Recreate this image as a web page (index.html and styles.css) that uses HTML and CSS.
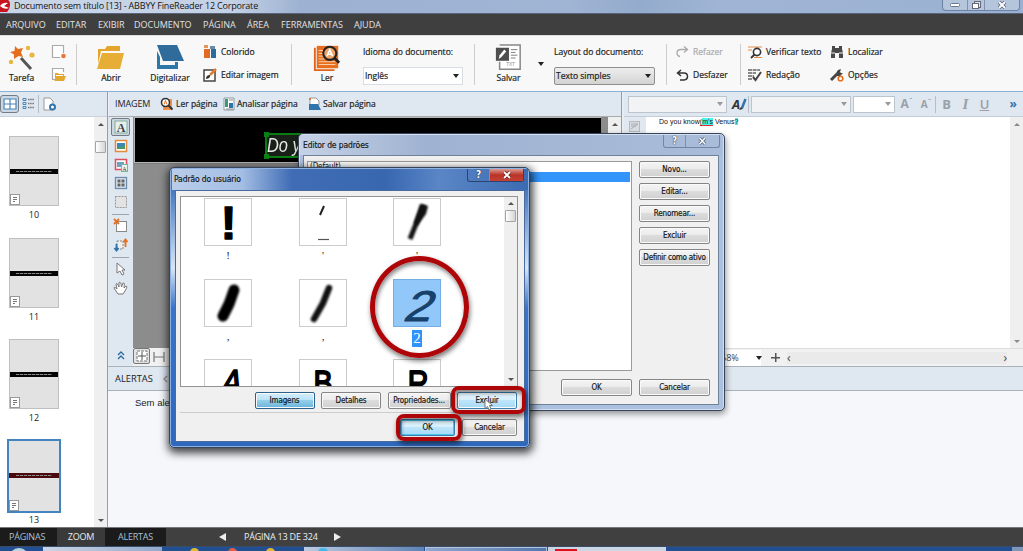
FILE: index.html
```html
<!DOCTYPE html>
<html lang="pt">
<head>
<meta charset="utf-8">
<title>ABBYY FineReader 12 Corporate</title>
<link rel="stylesheet" href="styles.css">
</head>
<body>
<div class="app">
  <header class="titlebar">
    <svg class="logo" width="11" height="13" viewBox="0 0 11 13"><path d="M0 0H8Q10 1 10 5Q10 9 7 12H0Z" fill="#c8141e"/><path d="M0 6Q3 2 8 3L4 6L9 8Q4 10 0 6Z" fill="#fff"/></svg>
    <span class="title-text">Documento sem título [13] - ABBYY FineReader 12 Corporate</span>
    <div class="winctl"><i><svg width="10" height="5"><rect x=".5" y=".5" width="9" height="3" rx="1" fill="#fff" stroke="#68788f"/></svg></i><i><svg width="9" height="9"><rect x="2.5" y=".5" width="6" height="6" fill="#dde5ef" stroke="#667"/><rect x=".5" y="2.5" width="6" height="5" fill="#fff" stroke="#667"/></svg></i><i class="wide"><svg width="10" height="9"><path d="M2 1L8 7M8 1L2 7" stroke="#5c6a80" stroke-width="3.6"/><path d="M2 1L8 7M8 1L2 7" stroke="#fff" stroke-width="1.8"/></svg></i></div>
  </header>
  <nav class="menu"><span class="m1">ARQUIVO</span><span class="m2">EDITAR</span><span class="m3">EXIBIR</span><span class="m4">DOCUMENTO</span><span class="m5">PÁGINA</span><span class="m6">ÁREA</span><span class="m7">FERRAMENTAS</span><span class="m8">AJUDA</span></nav>

  <section class="toolbar">
    <div class="big tarefa">
      <svg width="28" height="28" viewBox="0 0 28 28"><path d="M13 14L23 25" stroke="#555" stroke-width="3"/><path d="M7 2L10 5L15 4L13 8.500L15 13L10.500 12L6 15L6 10.500L2 8L6.500 7Z" fill="#e66f1e"/><g fill="#e9b640"><circle cx="20" cy="4" r="2.200"/><circle cx="24" cy="11" r="2.600"/><circle cx="3" cy="18" r="2.200"/></g></svg>
      <b>Tarefa</b>
    </div>
    <div class="stack">
      <svg width="16" height="16" viewBox="0 0 16 16"><path d="M12.500 9V1.500H1.500V13.500H9" fill="#fff" stroke="#aaa" stroke-width="1.200"/><circle cx="12.500" cy="12" r="2.300" fill="#e8763c"/></svg>
      <svg width="16" height="16" viewBox="0 0 16 16"><path d="M12.500 5V1.500H1.500V12.500H4" fill="#fff" stroke="#aaa" stroke-width="1.200"/><path d="M4 13V6h3l1 1h5v2h2l-2 5H3z" fill="#e3a72e"/><path d="M5 8.500h7" stroke="#fff" stroke-width="1"/></svg>
    </div>
    <i class="sep"></i>
    <div class="big abrir"><svg width="28" height="28" viewBox="0 0 28 28"><path d="M1 5H8L10 2H23V7H4L1 20Z" fill="#e3a62b"/><path d="M5 9H27L23 25H0Z" fill="#e6ad37"/></svg><b>Abrir</b></div>
    <div class="big digi"><svg width="28" height="28" viewBox="0 0 28 28"><path d="M1 1H21L28 17H7Z" fill="#2f6c9b"/><path d="M1 7V25H22V18H19V21H4V13Z" fill="#2d77a8"/></svg><b>Digitalizar</b></div>
    <div class="pair p1">
      <div><svg width="14" height="14" viewBox="0 0 14 14"><path d="M1 0h4v3H1z" fill="#e4945c"/><path d="M1 4h6v9H1z" fill="#e26b24"/><path d="M7 1h5v3H7z" fill="#6a8aa4"/><path d="M8 4h5v9H8z" fill="#2c6b9c"/></svg><b>Colorido</b></div>
      <div><svg width="14" height="14" viewBox="0 0 14 14"><path d="M1 2H12V13H1Z" fill="#fff" stroke="#444" stroke-width="1.500"/><path d="M13 1L7 7" stroke="#e27b32" stroke-width="2.500"/><path d="M3 11Q3 7 7 7Q8 10 3 11" fill="#333"/></svg><b>Editar imagem</b></div>
    </div>
    <i class="sep"></i>
    <div class="big ler"><svg width="30" height="30" viewBox="0 0 30 30"><path d="M1 4V29H23V27H3V4Z" fill="#e0651a"/><path d="M4 2H27V26H4Z" fill="#e86d1c"/><path d="M6 7h7M6 10h6M6 13h6M6 16h7M6 19h18M6 22h18" stroke="#fbd9b8" stroke-width="1"/><circle cx="18" cy="10" r="7" fill="#f0a468" stroke="#222" stroke-width="2.200"/><path d="M15 13L18 6L21 13M16 11H20" fill="none" stroke="#fff" stroke-width="1.600"/><path d="M23 15L28 20" stroke="#222" stroke-width="3"/></svg><b>Ler</b></div>
    <div class="field f1"><b>Idioma do documento:</b><div class="select"><b>Inglês</b><i class="dn"></i></div></div>
    <i class="sep"></i>
    <div class="big salvar"><svg width="29" height="30" viewBox="0 0 29 30"><path d="M5 1H27V27H5V19" fill="#fff" stroke="#888" stroke-width="1.600"/><path d="M1 4H15V18H1Z" fill="#4e4e4e"/><path d="M4 16l1-4 5-6 2 2-5 6z" fill="#fff"/><path d="M17 6h7M17 9h5M17 12h7M17 15h5" stroke="#777"/><text x="12" y="24" class="txt">TXT</text></svg><b>Salvar</b></div>
    <i class="dn mid"></i>
    <div class="field f2"><b>Layout do documento:</b><div class="select grey"><b>Texto simples</b><i class="dn"></i></div></div>
    <i class="sep"></i>
    <div class="pair p2">
      <div class="off"><svg width="13" height="14" viewBox="0 0 13 14"><path d="M4 11.500Q1 11 1 8Q1 4.500 5 4.500H11M8 1.500L11.500 4.500L8 7.500" fill="none" stroke="#aaa" stroke-width="1.300"/></svg><b>Refazer</b></div>
      <div><svg width="13" height="14" viewBox="0 0 13 14"><path d="M4 12H8Q11.500 11.500 11.500 8.500Q11.500 5 8 5H1.500M5 2L1.500 5L5 8" fill="none" stroke="#333" stroke-width="1.500"/></svg><b>Desfazer</b></div>
    </div>
    <i class="sep"></i>
    <div class="pair p3">
      <div><svg width="14" height="14" viewBox="0 0 14 14"><path d="M0 2H14M6 12.500H14M0 5h4" stroke="#e58b48" stroke-width="1.200"/><circle cx="9" cy="7" r="3.600" fill="#fff" stroke="#333" stroke-width="1.600"/><path d="M6.500 9.500L3 13" stroke="#333" stroke-width="1.800"/></svg><b>Verificar texto</b></div>
      <div><svg width="14" height="14" viewBox="0 0 14 14"><path d="M0 2h12M0 5h8M0 8h6M0 11h4" stroke="#666" stroke-width="1.600" stroke-dasharray="4 .6"/><path d="M13 4L7.500 12L5 9" fill="none" stroke="#444" stroke-width="2"/></svg><b>Redação</b></div>
    </div>
    <div class="pair p4">
      <div><svg width="14" height="14" viewBox="0 0 14 14"><path d="M2 1h3v2h4V1h3v3l1 4v5H9V8H5v5H1V8l1-4z" fill="#494949"/><path d="M1 8h4M9 8h4" stroke="#eee"/></svg><b>Localizar</b></div>
      <div><svg width="14" height="14" viewBox="0 0 14 14"><path d="M1 12L7 6" stroke="#444" stroke-width="3"/><path d="M11 1L8 2L6 5L7 8L10 8L13 5L11 5L10 4Z" fill="#444"/><circle cx="10.500" cy="10.500" r="2.300" fill="#fff" stroke="#e86d1c" stroke-width="1.600"/></svg><b>Opções</b></div>
    </div>
  </section>

  <main class="main">
    <aside class="pages">
      <div class="phead">
        <i class="viewbtn"><svg width="14" height="12" viewBox="0 0 14 12"><path d="M1 1H13V11H1ZM7 1V11M1 6H13" fill="#fff" stroke="#4b86b8" stroke-width="1.200"/></svg></i>
        <svg width="13" height="12" viewBox="0 0 13 12"><g fill="#dceaf6" stroke="#4b86b8"><path d="M1 .5h3v2H1zM1 4.500h3v2H1zM1 8.500h3v2H1z"/></g><path d="M6 1.500h6M6 5.500h6M6 9.500h6" stroke="#777" stroke-width="1.500" stroke-dasharray="1.500 .7"/></svg>
        <i class="vsep"></i>
        <svg width="14" height="14" viewBox="0 0 14 14"><path d="M1 1H7L10 4V13H1Z" fill="#fff" stroke="#999"/><circle cx="9.500" cy="10" r="2.500" fill="#fff" stroke="#3474a8" stroke-width="2"/></svg>
      </div>
      <div class="pbody">
        <div class="thumbs">
          <figure><div class="thumb"><i class="strip"></i><svg width="10" height="11"><rect x=".5" y=".5" width="9" height="10" fill="#fff" stroke="#999"/><path d="M3 3.500h4M3 5.500h4M3 7.500h2" stroke="#777"/></svg></div><figcaption>10</figcaption></figure>
          <figure><div class="thumb"><i class="strip"></i><svg width="10" height="11"><rect x=".5" y=".5" width="9" height="10" fill="#fff" stroke="#999"/><path d="M3 3.500h4M3 5.500h4M3 7.500h2" stroke="#777"/></svg></div><figcaption>11</figcaption></figure>
          <figure><div class="thumb"><i class="strip"></i><svg width="10" height="11"><rect x=".5" y=".5" width="9" height="10" fill="#fff" stroke="#999"/><path d="M3 3.500h4M3 5.500h4M3 7.500h2" stroke="#777"/></svg></div><figcaption>12</figcaption></figure>
          <figure><div class="thumb cur"><i class="strip"></i><svg width="10" height="11"><rect x=".5" y=".5" width="9" height="10" fill="#fff" stroke="#999"/><path d="M3 3.500h4M3 5.500h4M3 7.500h2" stroke="#777"/></svg></div><figcaption>13</figcaption></figure>
        </div>
        <div class="vscroll"><i class="up"></i><i class="knob"></i><i class="down"></i></div>
      </div>
    </aside>

    <div class="work">
      <div class="upper">
        <section class="image">
          <div class="ihead"><span class="cap">IMAGEM</span>
            <svg width="14" height="14" viewBox="0 0 14 14"><path d="M3 2H12V13H3Z" fill="#f0924e"/><circle cx="5.500" cy="5.500" r="4" fill="#fff" stroke="#333" stroke-width="1.600"/><path d="M8.500 8.500L12.500 12.500" stroke="#333" stroke-width="2"/><path d="M4 7.500L5.500 3.500L7 7.500" fill="none" stroke="#e66f1e"/></svg><b class="t1">Ler página</b>
            <svg width="12" height="14" viewBox="0 0 12 14"><path d="M1 1H11V13H1Z" fill="#fff" stroke="#8a979f"/><path d="M2 2h3v8H2z" fill="#3a9a78"/><path d="M6 6h4v5H6z" fill="#2f75ac"/><path d="M6 3h4M3 12h7" stroke="#888"/></svg><b class="t2">Analisar página</b>
            <svg width="13" height="14" viewBox="0 0 13 14"><path d="M2 1H8L11 4V8H2Z" fill="#fff" stroke="#999"/><path d="M1 1h2v2H1z" fill="#e8763c"/><path d="M1 7H10L13 13H1Z" fill="#2f75ac"/></svg><b class="t3">Salvar página</b>
          </div>
          <div class="ibody">
            <div class="tools">
              <i class="tool on"><svg width="14" height="14" viewBox="0 0 14 14"><rect x="1" y="1" width="12" height="12" fill="#e8f0ee" stroke="#7fae9d"/><text x="7" y="11.500" class="tA">A</text></svg></i>
              <i class="tool"><svg width="14" height="14" viewBox="0 0 14 14"><rect x="1.500" y="1.500" width="11" height="11" fill="#fff" stroke="#e58a3c" stroke-width="1.500"/><rect x="3" y="4" width="8" height="6" fill="#3b87b8"/><path d="M3 10l3-3 2 1 3-2v4z" fill="#4a9a69"/></svg></i>
              <i class="tool"><svg width="14" height="14" viewBox="0 0 14 14"><rect x="1.500" y="1.500" width="11" height="10" fill="#fff" stroke="#dc4d5e" stroke-width="1.500"/><path d="M3 4h7v5H3z" fill="#6ea0c0"/><rect x="7.500" y="6.500" width="6" height="7" fill="#e9f4ee" stroke="#7cb49c"/><text x="10.500" y="12.500" class="ta">A</text></svg></i>
              <i class="tool"><svg width="14" height="14" viewBox="0 0 14 14"><rect x="1.500" y="1.500" width="11" height="11" fill="#dbe4ed" stroke="#6b8eae" stroke-width="1.300"/><path d="M3.500 3.500h3v3h-3zM7.500 3.500h3v3h-3zM3.500 7.500h3v3h-3zM7.500 7.500h3v3h-3z" fill="#666"/></svg></i>
              <i class="tool"><svg width="14" height="14" viewBox="0 0 14 14"><rect x="1.500" y="1.500" width="11" height="11" fill="#e3e3e3" stroke="#999" stroke-dasharray="2 1"/></svg></i>
              <i class="hr"></i>
              <i class="tool"><svg width="14" height="14" viewBox="0 0 14 14"><rect x="2.500" y="2.500" width="10" height="10" fill="#fff" stroke="#888"/><path d="M0 0L5 5M5 0L0 5" stroke="#e8701e" stroke-width="1.800"/></svg></i>
              <i class="tool"><svg width="14" height="14" viewBox="0 0 14 14"><path d="M3 3h6v8H3z" fill="#eee" stroke="#888" stroke-dasharray="2 1"/><path d="M11.500 9V2M9.500 4L11.500 1.500L13.500 4" fill="none" stroke="#e8701e" stroke-width="1.800"/><path d="M2.500 6V12M.5 10L2.500 12.500L4.500 10" fill="none" stroke="#2a74ad" stroke-width="1.800"/></svg></i>
              <i class="hr"></i>
              <i class="tool"><svg width="12" height="14" viewBox="0 0 12 14"><path d="M2 1V11L5 9L7 13L9 12L7 8H10Z" fill="#fff" stroke="#777"/></svg></i>
              <i class="tool"><svg width="15" height="14" viewBox="0 0 15 14"><path d="M5 13L1 7Q1 5 4 8L3 3Q4 1 6 6V1.500Q8 0 8.500 6L10 2Q12 1 11 7L13 5Q15 5 12 10L10 13Z" fill="#fff" stroke="#777"/></svg></i>
              <span class="chev"><svg width="8" height="9"><path d="M1 4L4 1L7 4M1 8L4 5L7 8" fill="none" stroke="#2a6a9c" stroke-width="1.300"/></svg></span>
            </div>
            <div class="view">
              <div class="canvas">
                <div class="scan"><div class="region"><span>Do y</span><i></i><i></i></div></div>
                <div class="vscroll cs"><i class="up"></i></div>
              </div>
              <div class="zoombar"><i class="zb on"><svg width="12" height="12" viewBox="0 0 12 12"><path d="M1 1H11V11H1Z" fill="#fff" stroke="#777" stroke-dasharray="3 1"/><path d="M6 2V10M2 6H10" stroke="#555"/></svg></i><i class="zb"><svg width="12" height="12" viewBox="0 0 12 12"><path d="M1 1V11M11 1V11M1 6H11" stroke="#777" stroke-width="1.200"/></svg></i></div>
            </div>
          </div>
        </section>

        <section class="text">
          <div class="thead">
            <i class="inp i1"><i class="dn"></i></i>
            <svg class="fa" width="16" height="15" viewBox="0 0 16 15"><text x="0" y="12" class="aedit">A</text><path d="M13.500 2L10 11" stroke="#2f75ac" stroke-width="2.500"/><path d="M9 10L7 13L11 12Z" fill="#333"/></svg>
            <i class="vs"></i>
            <i class="inp i2"><i class="dn"></i></i>
            <i class="inp i3"><i class="dn"></i></i>
            <span class="g ga">A<sup>ˆ</sup></span><span class="g gb">A<sup>ˇ</sup></span><i class="vs v2"></i><span class="g gB">B</span><span class="g gI">I</span><span class="g gU">U</span><span class="more">»</span>
          </div>
          <div class="tbody">
            <div class="gut"><svg width="11" height="11"><rect x=".5" y=".5" width="10" height="10" fill="#d9dde2" stroke="#b5bac0"/><path d="M2 3h7M2 5h5M2 8L9 3" stroke="#a5acb3"/></svg></div>
            <p>Do you know<u>(</u><mark><u>m's</u></mark> Venus<mark>?</mark></p>
            <div class="vscroll ts"><i class="up"></i><i class="down"></i></div>
          </div>
          <div class="tfoot"><span class="pct">68%</span><i class="dn"></i><span class="plus"></span><span class="hs"><i>‹</i><i>›</i></span></div>
        </section>
      </div>
      <section class="alerts"><div class="ahead">ALERTAS <svg width="7" height="8"><path d="M4 1L1 4L4 7" fill="none" stroke="#999" stroke-width="1.500"/></svg></div><div class="abody">Sem alertas</div></section>
    </div>
  </main>

  <footer class="status"><span class="s1">PÁGINAS</span><span class="s2">ZOOM</span><span class="s3">ALERTAS</span><i class="tl"></i><span class="s4">PÁGINA 13 DE 324</span><i class="tr"></i></footer>
  <div class="task"><i class="k0"><i class="orb"></i></i><i class="k1"></i><i class="k2"><i class="y"></i><i class="r"></i><i class="y"></i></i><i class="k3"><i class="c"></i></i><i class="k4"></i><i class="k5"><i class="rr"></i></i><i class="k6"></i></div>
</div>

<section class="dialog editor">
  <div class="dhead"><span>Editor de padrões</span><div class="dctl"><i>?</i><i class="x"><svg width="9" height="8"><path d="M1.500 1L7 7M7 1L1.500 7" stroke="#56647a" stroke-width="3"/><path d="M1.500 1L7 7M7 1L1.500 7" stroke="#fff" stroke-width="1.400"/></svg></i></div></div>
  <div class="dcont">
    <div class="lcol"><div class="list"><span>(Default)</span><i></i></div><button>OK</button></div>
    <div class="rcol"><button>Novo...</button><button>Editar...</button><button>Renomear...</button><button>Excluir</button><button class="tight">Definir como ativo</button><button class="cancel">Cancelar</button></div>
  </div>
</section>

<section class="dialog user">
  <div class="dhead"><span>Padrão do usuário</span><div class="dctl"><i>?</i><i class="x"><svg width="10" height="8"><path d="M2 1L8 7M8 1L2 7" stroke="#6d2420" stroke-width="3.200"/><path d="M2 1L8 7M8 1L2 7" stroke="#fff" stroke-width="1.800"/></svg></i></div></div>
  <div class="dcont">
    <div class="pats">
      <div class="grid">
        <div class="cell"><svg width="48" height="48"><g transform="translate(23.500 40)"><text class="hand ex">!</text></g></svg><b>!</b></div>
        <div class="cell"><svg width="48" height="48"><path d="M24 7L20 16" stroke="#222" stroke-width="2"/><path d="M18 40.500H29" stroke="#555" stroke-width="1.200"/></svg><b>'</b></div>
        <div class="cell"><svg width="48" height="48" class="soft"><path d="M30 6L22 25L16 40" stroke="#111" stroke-width="5" fill="none"/><path d="M26 5L34 7L32 15L23 27L20 24Z" fill="#111"/></svg><b>'</b></div>
        <div class="cell"><svg width="48" height="48" class="soft"><path d="M29 10L24 24L18 36" stroke="#000" stroke-width="11" stroke-linecap="round" fill="none"/></svg><b>,</b></div>
        <div class="cell"><svg width="48" height="48" class="soft"><path d="M29 8L23 23L14 39" stroke="#111" stroke-width="6.500" stroke-linecap="round" fill="none"/></svg><b>,</b></div>
        <div class="cell sel"><svg width="48" height="48"><g transform="translate(22 41) skewX(-20) scale(1.150 1)"><text class="hand two">2</text></g></svg><b>2</b></div>
        <div class="cell"><svg width="48" height="48"><g transform="translate(24 35) skewX(-14) scale(.85 1)"><text class="hand">A</text></g></svg></div>
        <div class="cell"><svg width="48" height="48"><g transform="translate(23 35) scale(.8 1)"><text class="hand">B</text></g></svg></div>
        <div class="cell"><svg width="48" height="48"><g transform="translate(24 35) scale(.8 1)"><text class="hand">R</text></g></svg></div>
      </div>
      <div class="vscroll us"><i class="up"></i><i class="knob"></i><i class="down"></i></div>
    </div>
    <div class="row r1"><button class="blue">Imagens</button><button>Detalhes</button><button>Propriedades...</button><button class="hot">Excluir</button></div>
    <div class="row r2"><button class="hot def">OK</button><button>Cancelar</button></div>
  </div>
</section>
<i class="ring circle"></i><i class="ring box1"></i><i class="ring box2"></i>
<svg class="cursor" width="10" height="14" viewBox="0 0 10 14"><path d="M1 1V10.500L3.500 8.500L5 12L7 11L5.500 7.500H8.500Z" fill="#fff" stroke="#555" stroke-width=".8"/></svg>
</body>
</html>
```

FILE: styles.css
```css
*{box-sizing:border-box}
html,body{margin:0;width:1023px;height:551px;overflow:hidden}
body{position:relative;font:9px/12px "Open Sans","Noto Sans",sans-serif;color:#222}
i,b{font-style:normal}
b{font-weight:500}
svg{display:block;flex:none;overflow:visible}
span,b{white-space:nowrap}
.app{display:flex;flex-direction:column;width:1023px;height:551px}
.titlebar{height:14px;flex:none;display:flex;align-items:flex-start;background:linear-gradient(90deg,#c9d5e7 0,#c5d2e6 230px,#9db2d2 300px,#a0b4d4 570px,#93abcd 640px,#a0b5d5 720px,#9ab1d3);border-bottom:1px solid #56657b;color:#151515}
.title-text{padding-left:3px;width:250px;line-height:12px;letter-spacing:-.18px}
.winctl{margin-left:auto;margin-right:3px;display:flex;height:11px;border:1px solid #6e82a2;border-top:0;border-radius:0 0 4px 4px;background:#b5c5dc}
.winctl i{width:25px;display:flex;justify-content:center;align-items:center;border-right:1px solid #7e91ae}
.winctl i:nth-child(2){width:17px}
.winctl .wide{width:34px;border:0}
.menu{height:21px;flex:none;background:#3f3f3f;color:#e2e2e2;display:flex;line-height:21px;padding-left:6px;font-size:9px}
.m1{width:50px}.m2{width:42px}.m3{width:36px}.m4{width:69px}.m5{width:44px}.m6{width:34px}.m7{width:73px}
.toolbar{height:57px;flex:none;background:#f8f8f8;border-bottom:1px solid #8db0d2;display:flex;align-items:flex-start;padding-top:8px;border-top:1px solid #ddd;font-size:8.500px}
.toolbar b,.ihead b{line-height:12px;-webkit-text-stroke:.2px currentColor}
.sep{width:1px;height:41px;background:#cdcdcd;flex:none}
.big{display:flex;flex-direction:column;align-items:center;position:static}
.big svg{height:28px}
.tarefa{width:43px}.abrir{width:60px;margin-left:4px}.digi{width:58px}.ler{width:70px}.salvar{width:59px;margin-left:4px}
.stack{width:33px;padding:0 0 0 8px;display:flex;flex-direction:column;gap:7px}
.pair{display:flex;flex-direction:column;gap:9px;padding-top:1px}
.pair div{display:flex;gap:4px;align-items:center;height:14px}
.p1{width:92px;padding-left:4px}
.p2{width:73px;padding-left:9px}
.p3{width:89px;padding-left:7px}
.p4{padding-left:0}
.off{color:#aaa}
.field{display:flex;flex-direction:column;gap:9px;padding-top:2px}
.f1{width:112px;padding-left:1px;padding-right:11px}.f2{width:112px;padding-right:11px;margin-left:10px}
.select{height:18px;display:flex;align-items:center;justify-content:space-between;background:#fff;border:1px solid #d8dde3;padding:0 3px 0 1px}
.select.grey{background:linear-gradient(#eee,#d3d3d3);border:1px solid #8e8e8e;border-radius:2px}
.dn{width:0;height:0;border:3px solid transparent;border-top:4px solid #222;border-bottom:0;flex:none}
.mid{margin-top:18px;margin-left:0}
.txt{font:5px "Liberation Sans",sans-serif;fill:#888}
.main{display:flex;height:435px;flex:none}
.pages{width:108px;border-right:1px solid #999da3;display:flex;flex-direction:column;background:#fff}
.phead{height:25px;background:#dfe7f1;border-bottom:1px solid #c9d2dd;display:flex;align-items:center}
.viewbtn{width:19px;height:18px;border:1px solid #747c86;border-radius:3px;background:#cbd7e5;display:flex;align-items:center;justify-content:center;margin-right:3px}
.vsep{width:1px;height:18px;background:#b6bdc6;margin:0 4px 0 3px}
.pbody{display:flex;flex:1}
.thumbs{flex:1;padding:19px 0 0 9px;display:flex;flex-direction:column;gap:16px}
figure{margin:0;height:85.500px;width:50px}
.thumb{width:50px;height:70px;background:#e2e2e2;border:1px solid #bfbfbf;display:flex;flex-direction:column;align-items:flex-start;justify-content:space-between;padding-top:32px}
.strip{height:5px;width:100%;background:#050505;display:flex;align-items:center}
.strip::after{content:"";width:36px;height:1px;margin:auto;background:repeating-linear-gradient(90deg,#888 0 3px,#333 3px 4px)}
.cur{outline:2px solid #4384bf;outline-offset:0;border:0}
.cur .strip{background:#4b090e}
figcaption{text-align:center;line-height:18px;color:#222}
.vscroll{width:13px;background:#efefef;display:flex;flex-direction:column;align-items:center;flex:none;padding:6px 0 5px}
.vscroll .up{border:3px solid transparent;border-bottom:3px solid #555;border-top:0}
.vscroll .down{border:3px solid transparent;border-top:3px solid #555;border-bottom:0;margin-top:auto}
.knob{width:11px;height:12px;border:1px solid #a5a5a5;border-radius:1px;background:linear-gradient(90deg,#fff,#d5d5d5);margin-top:15px}
.work{flex:1;display:flex;flex-direction:column;min-width:0}
.upper{display:flex;height:274px}
.image{width:514px;border-right:1px solid #999da3;display:flex;flex-direction:column}
.ihead{height:25px;background:#dfe7f1;border-bottom:1px solid #aaa;border-left:1px solid #eef;display:flex;align-items:center;padding-left:6px;font-size:8.500px}
.cap{width:45px;font-size:9px;letter-spacing:-.1px}
.ihead b{padding-left:2px}
.t1{width:49px}.t2{width:73px}.t3{width:80px}
.ibody{display:flex;flex:1}
.tools{width:25px;background:#dfe7f1;display:flex;flex-direction:column;align-items:center;padding:1px 0 0}
.tool{width:19px;height:18.500px;display:flex;align-items:center;justify-content:center}
.tool.on{border:1px solid #737b84;border-radius:2px;background:#cdd6df;height:18px;margin-bottom:1px}
.tools .hr{width:17px;height:1px;background:#9ca3ab;margin:2.500px 0}
.tA{font:bold 12px "Liberation Serif",serif;fill:#444;text-anchor:middle}
.ta{font:6px "Liberation Serif",serif;fill:#444;text-anchor:middle}
.chev{margin-top:auto;margin-bottom:6px}
.view{flex:1;display:flex;flex-direction:column}
.canvas{height:231px;background:#8c8c8c;display:flex;justify-content:space-between}
.scan{width:467px;height:46px;background:#000;border:1px solid #b5b5b5;border-right:0;margin-left:1px;padding:15px 0 0 130px;box-shadow:0 1px 0 #7b7b7b}
.region{display:flex;align-items:center;position:relative;width:334px;height:25px;border:2px solid #0a7d12;background:#182018;color:#e8e8e8;font:italic 21px/20px "Liberation Sans",sans-serif}
.region span{transform:scaleX(.78);transform-origin:0 0;padding-bottom:2px}
.region i{position:absolute;width:5px;height:5px;background:#0a8012;left:-3px;top:-3px}
.region i+i{top:auto;bottom:-3px}
.cs{width:13px}
.zoombar{flex:1;background:#f1f1f1;display:flex}
.zb{width:17px;display:flex;align-items:center;justify-content:center}
.zb.on{border:1px solid #777;border-radius:2px;background:#e3e3e3;height:16px}
.text{flex:1;display:flex;flex-direction:column;border-left:2px solid #e6ecf3;min-width:0}
.thead{height:25px;background:#dfe7f1;border-bottom:1px solid #c4ccd5;display:flex;align-items:center;padding-left:4px}
.inp{height:17px;border:1px solid #bcc4cd;background:#f1f3f5;display:flex;justify-content:flex-end;align-items:center;padding-right:3px;flex:none}
.inp .dn,.thead .dn{border-top-color:#999}
.i1{width:99px}.i2{width:100px}.i3{width:42px;background:#fff;margin-left:2px}
.fa{margin-left:5px;margin-right:-1px}
.aedit{font:italic bold 13px "Open Sans",sans-serif;fill:#333}
.vs{width:1px;height:17px;background:#b6bdc6;margin:0 2px 0 1px}
.g{color:#9aa0a6;font-size:12px;font-weight:700;width:20px;text-align:center}
.g sup{font-size:7px;line-height:0}
.ga{width:23px}.gb{font-size:10px;width:16px}.v2{margin:0 0 0 1px}
.gB{width:21px;font-size:13px}
.gI{font-family:"Liberation Serif",serif;font-style:italic;font-size:15px;width:17px}
.gU{text-decoration:underline;font-weight:600;width:21px;font-size:13px}
.more{margin-left:auto;margin-right:6px;color:#3474a8;font-size:12px;font-weight:700;line-height:12px}
.tbody{height:231px;display:flex;background:#fff}
.gut{width:22px;background:#e1e8f0;padding:4px 0 0 5px}
.tbody p{margin:0;flex:1;padding-left:13px;font:7px/9px "Liberation Sans",sans-serif;letter-spacing:.03px;color:#111}
mark{background:#4ef0ee;color:#222}
.tbody u{text-decoration-color:#d33}
.ts .up,.ts .down{opacity:.65}
.tfoot{flex:1;background:#f1f1f1;border-top:1px solid #ddd;display:flex;align-items:center;color:#444}
.pct{width:137px;height:16px;background:#fff;padding-left:97px;font-size:9px;line-height:15px}
.tfoot .dn{margin-left:-5px}
.plus{width:9px;height:9px;margin-left:9px;background:linear-gradient(#555,#555) 50%/9px 1.500px no-repeat,linear-gradient(#555,#555) 50%/1.500px 9px no-repeat}
.hs{flex:1;display:flex;justify-content:space-between;margin:0 16px 0 7px;font-size:12px;line-height:12px;background:#eaeaea}
.alerts{flex:1;display:flex;flex-direction:column}
.ahead{height:25px;background:#dfe7f1;border-top:1px solid #aab2bb;border-bottom:1px solid #aab2bb;padding-left:7px;display:flex;gap:10px;align-items:center;font-size:9.300px}
.abody{flex:1;background:#f5f7fb;padding:6px 27px;font:9.500px/12px "Liberation Sans",sans-serif}
.status{height:19px;flex:none;background:#404040;border-top:1px solid #777;color:#eee;display:flex;align-items:center;font-size:9px;line-height:18px}
.s1{width:57px;background:#1b1b1b;padding-left:9px;color:#a9c0d5}.s2{width:48px;text-align:center;background:#3a3a3a}.s3{width:61px;background:#1b1b1b;text-align:center;color:#a9c0d5}
.status{letter-spacing:-.2px}
.tl,.tr{border:4px solid transparent;border-right:7px solid #eee;border-left:0;margin-left:53px}
.tr{border-left:7px solid #eee;border-right:0;margin-left:0}
.s4{width:91px;margin-left:18px}
.status .tr{margin-left:-1px}
.task{height:5px;display:flex;background:#214f91;border-top:1px solid #384b69;flex:none}
.task>i{height:5px;display:flex;overflow:hidden}
.k0{width:43px;padding-left:9px}.orb{width:20px;height:20px;border-radius:50%;background:#b8d4e3;margin-top:1px}
.k1{width:119px;background:linear-gradient(90deg,#cbd5e4,#91a9cb)}.k2{width:142px;padding-left:28px;gap:29px}
.k2 i{width:9px;height:9px;border-radius:5px;margin-top:1px}.y{background:#e6b82b}.r{background:#e55b43}
.k3{width:120px;background:linear-gradient(90deg,#bccbe0,#5f82b5);padding-left:14px}.c{width:10px;height:9px;border-radius:5px;background:#42b9e8;margin-top:1px}
.k4{width:122px;background:linear-gradient(90deg,#8ea8ce,#5378ae);border:1px solid #b4c4da;border-bottom:0;margin-left:1px}.k5{width:118px;background:#cbd6e5;margin-left:1px;padding-left:7px}.rr{width:22px;height:5px;background:#d9141d;margin-top:2px}
.k6{width:11px;margin-left:auto;background:#8096b8}
.dialog{position:absolute;display:flex;flex-direction:column;border:1px solid #38445a;border-radius:5px;font:8px/11px "DejaVu Sans Condensed","DejaVu Sans",sans-serif;letter-spacing:-.13px;color:#151515}
.editor{left:298px;top:133px;width:427px;height:278px;background:#acc1df;padding:0 5px 5px 4px;box-shadow:inset 0 0 0 1px #d5e0ef,1px 3px 6px #0006}
.dhead{height:21px;flex:none;display:flex;justify-content:space-between;line-height:20px;font-size:8.500px}
.editor .dhead{height:20px;background:linear-gradient(90deg,#c5d2e6,#9fb2d1 30%,#a9bcd9);margin:1px -3px 0}
.editor .dhead span{padding-left:3px}
.editor .dctl{margin-right:2px}
.dctl{display:flex;height:13px;border:1px solid #7186a6;border-top:0;border-radius:0 0 3px 3px;line-height:12px;font-weight:700;font-size:10px;color:#fff;text-shadow:0 0 1px #234,0 0 1px #234}
.dctl i{width:21px;display:flex;align-items:center;justify-content:center}
.dctl .x{width:34px;border-left:1px solid #7d90ad}
.dcont{flex:1;background:#f0f0f0;border:1px solid #70819a}
.editor .dcont{display:flex;padding:5px 8px 8px 3px;justify-content:space-between}
.lcol{display:flex;flex-direction:column;justify-content:space-between;align-items:flex-end}
.list{width:325px;height:210px;background:#fff;border:1px solid #9a9a9a}
.list span{display:block;padding-left:2px;height:9.500px;line-height:9.500px}
.list i{display:block;height:10px;margin-right:1px;background:#3395fb}
button{font:inherit;letter-spacing:inherit;color:#111;width:71px;height:17px;padding:0;border:1px solid #858585;border-radius:2px;background:linear-gradient(#f4f4f4,#ebebeb 48%,#dcdcdc 50%,#d0d0d0);box-shadow:inset 0 0 0 1px #fafafa;white-space:nowrap;text-align:center;flex:none}
button,.dhead span{-webkit-text-stroke:.15px #111}
.rcol{display:flex;flex-direction:column;gap:5px}
.tight{letter-spacing:-.1px}
.cancel{margin-top:auto}
.tight{letter-spacing:-.22px}
.user{left:169px;top:167px;width:361px;height:281px;background:linear-gradient(#4576be,#4576be 21px,#d8e6f6 100px,#3a74c8 140px,#2e68bd);padding:0 4px 5px 5px;box-shadow:inset 0 0 0 1px #8fb1e0,1px 3px 9px 2px #000b}
.user .dhead{background:linear-gradient(90deg,#b9cdea,#a4bee4 70px,#3f6cb5 120px,#3867b0 60%,#5a86c6 75%,#3d6bb2);margin:1px -3px 0}
.user .dhead span{padding-left:2px}
.user .dctl{margin-right:4px;border-color:#28446f}
.user .x{background:linear-gradient(#dc9b92,#b93427 50%,#c54133)}
.user .dcont{border-color:#496b9d;padding:5px 7px 5px 4px}
.pats{width:338px;height:191px;border:1px solid #929292;background:#fff;display:flex;justify-content:space-between;overflow:hidden}
.grid{padding:1px 0 0 23px;display:grid;grid-template-columns:95px 94px 95px;grid-auto-rows:80.500px;flex:none}
.cell svg{border:1px solid #ccc}
.cell b{display:block;width:48px;text-align:center;font:11px/14px "Liberation Serif",serif;padding-top:2px}
.hand{font:36px "Liberation Sans",sans-serif;text-anchor:middle;stroke:#000;stroke-width:1.800;stroke-linejoin:round}
.ex{font:bold 47px "Liberation Sans",sans-serif;stroke-width:1.500}
.soft path{filter:blur(.8px)}
.sel svg{background:#92c7f9;border-color:#73aee5}
.two{font:43px "Liberation Sans",sans-serif;fill:#17416b;stroke:#17416b;stroke-width:1}
.cell.sel b{width:10px;margin:3px auto 0 19px;padding:0;background:#2e93fa;color:#fff;font-size:15px;line-height:17px}
.us .knob{margin-top:5px}
.us{padding-top:5px}
.row{display:flex;justify-content:flex-end}
.row button{width:60px}
.r1{gap:6.500px;padding:4.500px 0 4px;border-bottom:1px solid #ccc;height:26px}
.r1 button:nth-child(3){width:63px;letter-spacing:-.15px}
.r2{gap:7px;padding-top:6px}
.r2 button{width:55px}
button.blue{border-color:#2c628b;background:linear-gradient(#d5eefb,#b8e2f7 48%,#94cfea 50%,#68b3db)}
button.hot{border-color:#3c7fb1;background:linear-gradient(#e6f6fe,#d5effd 48%,#bce5fc 50%,#a7d9f5)}
button.def{box-shadow:inset 0 0 0 1px #49c5ee}
.ring{position:absolute;border:5px solid #ae0509;box-shadow:1px 3px 5px #0008,inset 1px 3px 4px #0007}
.circle{left:370px;top:256px;width:99px;height:102px;border-radius:50%}
.box1{left:451px;top:386px;width:75px;height:28px;border-width:4px;border-radius:8px}
.box2{left:396px;top:414px;width:66px;height:27px;border-width:4px;border-radius:8px}
.cursor{position:absolute;left:484px;top:398px}
```
